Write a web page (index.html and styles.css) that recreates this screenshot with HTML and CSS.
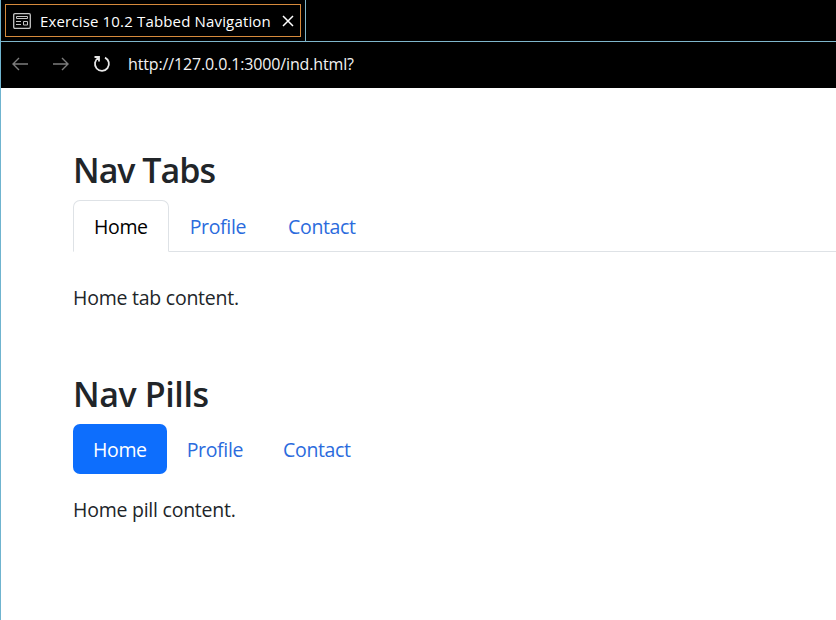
FILE: index.html
```html
<!DOCTYPE html>
<html lang="en">
<head>
<meta charset="utf-8">
<title>Exercise 10.2 Tabbed Navigation</title>
<link rel="stylesheet" href="styles.css">
</head>
<body>
<div class="window">
  <header class="tabbar">
    <div class="editor-tab">
      <div class="focus-ring">
        <svg class="tab-icon" width="18" height="16" viewBox="0 0 18 16" fill="none" stroke="#c4c4c4"><rect x=".7" y=".7" width="16.600" height="14.600" rx="1.200" stroke-width="1.3"/><path d="M3.500 3.500h11v2h-11zM3 8.500h5M3 11.500h5M10.500 8.500h4v3.500h-4z"/></svg>
        <span class="tab-title">Exercise 10.2 Tabbed Navigation</span>
        <svg class="close" width="12" height="12" viewBox="0 0 12 12" stroke="#fff" stroke-width="1.5"><path d="M1 1l10 10M11 1L1 11"/></svg>
      </div>
    </div>
  </header>
  <div class="toolbar">
    <svg width="18" height="16" viewBox="0 0 18 16" fill="none" stroke="#7c7c7c" stroke-width="1.4"><path d="M17 8H2M8 2L2 8l6 6"/></svg>
    <svg width="18" height="16" viewBox="0 0 18 16" fill="none" stroke="#7c7c7c" stroke-width="1.4"><path d="M1 8h15M10 2l6 6-6 6"/></svg>
    <svg width="18" height="18" viewBox="0 0 18 18" fill="none" stroke="#e8e8e8" stroke-width="1.8"><path d="M1.500 2H6v4.500M5.500 2.800A7 7 0 1 0 12 2.600"/></svg>
    <span class="url">http://127.0.0.1:3000/ind.html?</span>
  </div>
  <main class="page">
    <h2 class="h-tabs">Nav Tabs</h2>
    <nav class="tabs">
      <a class="link active">Home</a>
      <a class="link">Profile</a>
      <a class="link">Contact</a>
    </nav>
    <p class="tab-copy">Home tab content.</p>
    <h2>Nav Pills</h2>
    <nav class="pills">
      <a class="link active">Home</a>
      <a class="link">Profile</a>
      <a class="link">Contact</a>
    </nav>
    <p class="pill-copy">Home pill content.</p>
  </main>
</div>
</body>
</html>
```
FILE: styles.css
```css
* { box-sizing: border-box; }
body { margin: 0; background: #fff; font-family: "Open Sans", "Noto Sans", sans-serif; color: #212529; }
.window { height: 620px; border-left: 1px solid #6fb4cf; overflow: hidden; white-space: nowrap; }
.tabbar { height: 42px; background: #000; border-bottom: 1px solid #7fb6cb; display: flex; }
.editor-tab { width: 305px; height: 41px; padding: 4px; border-right: 1px solid #7fb6cb; color: #fff; font-size: 15px; }
.focus-ring { width: 296px; height: 33px; border: 1px solid #d68a3c; padding-left: 7px; display: flex; align-items: center; }
.tab-icon { margin-top: 1px; }
.tab-title { margin-left: 9px; width: 231px; letter-spacing: 0.16px; }
.close { margin-left: 11px; }
.toolbar { height: 46px; background: #000; color: #f2f2f2; display: flex; align-items: center; padding: 0 0 3px 10px; gap: 23px; font-size: 16px; }
.url { margin-left: -6px; letter-spacing: -0.14px; }
.page { padding: 60px 0 0 72px; }
h2 { margin: 0; height: 52px; line-height: 45px; font-size: 34px; font-weight: 600; letter-spacing: -0.4px; }
.h-tabs { letter-spacing: -1px; }
nav { display: flex; font-size: 19.5px; line-height: 30px; letter-spacing: -0.35px; }
.link { color: #2b6bdd; }
.tabs { height: 52px; border-bottom: 1px solid #dee2e6; }
.tabs .link { height: 52px; padding: 11px 20px; border: 1px solid transparent; }
.tabs .active { color: #000; background: #fff; border-color: #dee2e6 #dee2e6 #fff; border-radius: 7px 7px 0 0; }
.pills .link { height: 50px; padding: 11px 20px 9px; border-radius: 7px; }
.pills .active { color: #fff; background: #0d6efd; }
p { margin: 0; font-size: 19.5px; line-height: 30px; letter-spacing: -0.24px; }
.tab-copy { padding-top: 31px; height: 120px; }
.pill-copy { padding-top: 21px; }
```
